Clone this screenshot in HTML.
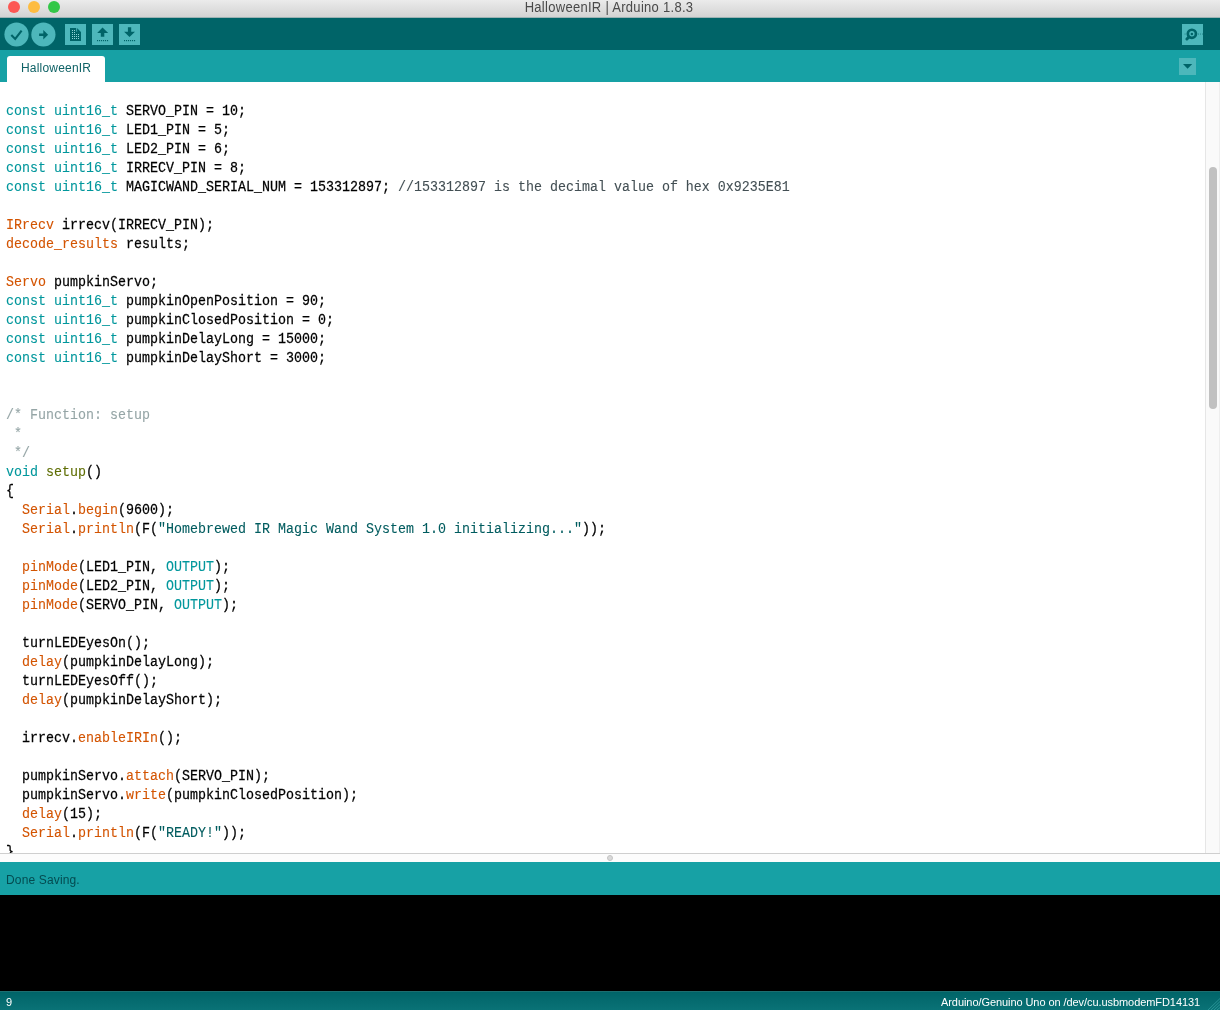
<!DOCTYPE html>
<html><head><meta charset="utf-8">
<style>
*{margin:0;padding:0;box-sizing:border-box}
html,body{width:1220px;height:1010px;overflow:hidden;background:#fff;font-family:"Liberation Sans",sans-serif}
#title{position:absolute;left:0;top:0;width:1220px;height:18px;background:linear-gradient(#ebebeb,#d3d3d3);border-bottom:1px solid #9db3b4}
#title .t{position:absolute;left:-1px;width:1220px;top:-2px;text-align:center;font-size:13px;letter-spacing:0.29px;line-height:15px;color:#4a4a4a}
.tl{position:absolute;top:1px;width:12px;height:12px;border-radius:50%}
#toolbar{position:absolute;left:0;top:18px;width:1220px;height:32px;background:#006468}
#tabs{position:absolute;left:0;top:50px;width:1220px;height:32px;background:#17a1a5}
#tab{position:absolute;left:7px;top:6px;width:98px;height:26px;background:#fff;border-radius:3px 3px 0 0;font-size:12px;letter-spacing:0.2px;color:#0f6266;line-height:24px;text-align:center}
.cb{position:absolute;top:4.5px;width:24px;height:24px;border-radius:50%;background:#4db7bb}
.sb{position:absolute;top:6px;width:21px;height:21px;background:#4db7bb}
#editor{position:absolute;left:0;top:82px;width:1205px;height:771px;overflow:hidden;background:#fff}
#code{position:absolute;left:6px;top:20px;will-change:transform;-webkit-text-stroke:0.22px;font-family:"Liberation Mono",monospace;font-size:13.33px;white-space:pre;color:#000}
.l{height:19px;width:1190px}
.t{height:16px;line-height:16px;transform:scale(1,1.15);transform-origin:0 0}
.k,.o,.c,.c2,.s,.g{-webkit-text-stroke:0.1px}
.ga{will-change:transform;display:inline-block}
.k{color:#00979c}.o{color:#d35400}.c{color:#95a5a6}.c2{color:#434f54}.s{color:#005c5f}.g{color:#5e6d03}
#scroll{position:absolute;left:1205px;top:82px;width:15px;height:771px;background:#fafafa;border-left:1px solid #e6e6e6;border-right:1px solid #eeeeee}
#thumb{position:absolute;left:3px;top:85px;width:8px;height:242px;border-radius:4px;background:#c1c1c1}
#divider{position:absolute;left:0;top:853px;width:1220px;height:9px;background:#fcfcfc;border-top:1px solid #cfcfcf}
#divider i{position:absolute;left:607px;top:1px;width:6px;height:6px;border-radius:50%;background:#d9d9d9;border:1px solid #c4c4c4}
#status{position:absolute;left:0;top:862px;width:1220px;height:33px;background:#17a1a5;font-size:12px;letter-spacing:0.15px;color:#044b50;line-height:36px;padding-left:6px}
#console{position:absolute;left:0;top:895px;width:1220px;height:96px;background:#000}
#bottom{position:absolute;left:0;top:991px;width:1220px;height:19px;background:linear-gradient(#006468,#0a7276);border-top:1px solid #1c6e70;color:#fff;font-size:11px;line-height:21px}
</style></head><body>
<div id="title">
<div class="tl" style="left:8px;background:#fc5753"></div>
<div class="tl" style="left:28px;background:#fdbc40"></div>
<div class="tl" style="left:48px;background:#33c748"></div>
<div class="t ga">HalloweenIR | Arduino 1.8.3</div>
</div>
<div id="toolbar">
<svg width="1220" height="32" viewBox="0 18 1220 32" style="position:absolute;left:0;top:0">
<g fill="#4db7bb">
<circle cx="16.5" cy="34.5" r="12.1"/><circle cx="43.4" cy="34.5" r="12.1"/>
<rect x="65" y="24" width="21" height="21"/><rect x="92" y="24" width="21" height="21"/><rect x="119" y="24" width="21" height="21"/>
<rect x="1182" y="24" width="21" height="21"/>
</g>
<g fill="#006468" stroke="none">
<path d="M11.3 35 L15.2 39 L21.6 30.7" fill="none" stroke="#006468" stroke-width="2.1"/>
<path d="M39.1 33.5 H43.3 V30.1 L48.1 34.7 L43.3 39.5 V35.9 H39.1 Z"/>
<!-- new doc -->
<path d="M70 28 H77 L81 32 V41 H70 Z"/>
<!-- upload -->
<path d="M102.5 27.6 L108.2 33 H104.3 V36.8 H100.8 V33 H97.2 Z"/>
<!-- download -->
<path d="M127.9 27.3 H131.2 V31.8 H135 L129.5 37 L124.1 31.8 H127.9 Z"/>
</g>
<g fill="#4db7bb">
<path d="M77.6 28 L81 31.4 V28 Z" /><rect x="76.2" y="28" width="0.9" height="3.6" fill="#4db7bb"/>
</g>
<g fill="#8fd3d6" id="dots"><rect x="72" y="30" width="1" height="1"/><rect x="74" y="30" width="1" height="1"/><rect x="72" y="32" width="1" height="1"/><rect x="74" y="32" width="1" height="1"/><rect x="72" y="34" width="1" height="1"/><rect x="74" y="34" width="1" height="1"/><rect x="76" y="34" width="1" height="1"/><rect x="78" y="34" width="1" height="1"/><rect x="72" y="36" width="1" height="1"/><rect x="74" y="36" width="1" height="1"/><rect x="76" y="36" width="1" height="1"/><rect x="78" y="36" width="1" height="1"/><rect x="72" y="38" width="1" height="1"/><rect x="74" y="38" width="1" height="1"/><rect x="76" y="38" width="1" height="1"/><rect x="78" y="38" width="1" height="1"/></g>
<g fill="#006468" id="udots"><rect x="97" y="40" width="1.1" height="1.2"/><rect x="124" y="40" width="1.1" height="1.2"/><rect x="99" y="40" width="1.1" height="1.2"/><rect x="126" y="40" width="1.1" height="1.2"/><rect x="101" y="40" width="1.1" height="1.2"/><rect x="128" y="40" width="1.1" height="1.2"/><rect x="103" y="40" width="1.1" height="1.2"/><rect x="130" y="40" width="1.1" height="1.2"/><rect x="105" y="40" width="1.1" height="1.2"/><rect x="132" y="40" width="1.1" height="1.2"/><rect x="107" y="40" width="1.1" height="1.2"/><rect x="134" y="40" width="1.1" height="1.2"/></g>
<!-- serial monitor -->
<circle cx="1191.9" cy="33.8" r="4.05" fill="none" stroke="#006468" stroke-width="2.7"/>
<circle cx="1191.9" cy="33.9" r="1.25" fill="#006468"/>
<path d="M1189 37 L1186.9 39" stroke="#006468" stroke-width="3" stroke-linecap="round"/>
<g fill="#006468" opacity="0.75"><rect x="1184.6" y="33.6" width="0.9" height="0.9"/><rect x="1198" y="33.6" width="0.9" height="0.9"/><rect x="1200" y="33.6" width="0.9" height="0.9"/><rect x="1202" y="33.6" width="0.9" height="0.9"/></g>
</svg>
</div>
<div id="tabs"><div id="tab"><span class="ga">HalloweenIR</span></div>
<svg width="17" height="17" style="position:absolute;left:1179px;top:8px"><rect width="17" height="17" fill="#4db7bb"/><path d="M4 6 H13.2 L8.6 10.8 Z" fill="#006468"/></svg>
</div>
<div id="editor"><div id="code"><div class="l"><div class="t"><span class="k">const</span> <span class="k">uint16_t</span> SERVO_PIN = 10;</div></div><div class="l"><div class="t"><span class="k">const</span> <span class="k">uint16_t</span> LED1_PIN = 5;</div></div><div class="l"><div class="t"><span class="k">const</span> <span class="k">uint16_t</span> LED2_PIN = 6;</div></div><div class="l"><div class="t"><span class="k">const</span> <span class="k">uint16_t</span> IRRECV_PIN = 8;</div></div><div class="l"><div class="t"><span class="k">const</span> <span class="k">uint16_t</span> MAGICWAND_SERIAL_NUM = 153312897; <span class="c2">//153312897 is the decimal value of hex 0x9235E81</span></div></div><div class="l"><div class="t"> </div></div><div class="l"><div class="t"><span class="o">IRrecv</span> irrecv(IRRECV_PIN);</div></div><div class="l"><div class="t"><span class="o">decode_results</span> results;</div></div><div class="l"><div class="t"> </div></div><div class="l"><div class="t"><span class="o">Servo</span> pumpkinServo;</div></div><div class="l"><div class="t"><span class="k">const</span> <span class="k">uint16_t</span> pumpkinOpenPosition = 90;</div></div><div class="l"><div class="t"><span class="k">const</span> <span class="k">uint16_t</span> pumpkinClosedPosition = 0;</div></div><div class="l"><div class="t"><span class="k">const</span> <span class="k">uint16_t</span> pumpkinDelayLong = 15000;</div></div><div class="l"><div class="t"><span class="k">const</span> <span class="k">uint16_t</span> pumpkinDelayShort = 3000;</div></div><div class="l"><div class="t"> </div></div><div class="l"><div class="t"> </div></div><div class="l"><div class="t"><span class="c">/* Function: setup</span></div></div><div class="l"><div class="t"><span class="c"> *</span></div></div><div class="l"><div class="t"><span class="c"> */</span></div></div><div class="l"><div class="t"><span class="k">void</span> <span class="g">setup</span>()</div></div><div class="l"><div class="t">{</div></div><div class="l"><div class="t">  <span class="o">Serial</span>.<span class="o">begin</span>(9600);</div></div><div class="l"><div class="t">  <span class="o">Serial</span>.<span class="o">println</span>(F(<span class="s">"Homebrewed IR Magic Wand System 1.0 initializing..."</span>));</div></div><div class="l"><div class="t"> </div></div><div class="l"><div class="t">  <span class="o">pinMode</span>(LED1_PIN, <span class="k">OUTPUT</span>);</div></div><div class="l"><div class="t">  <span class="o">pinMode</span>(LED2_PIN, <span class="k">OUTPUT</span>);</div></div><div class="l"><div class="t">  <span class="o">pinMode</span>(SERVO_PIN, <span class="k">OUTPUT</span>);</div></div><div class="l"><div class="t"> </div></div><div class="l"><div class="t">  turnLEDEyesOn();</div></div><div class="l"><div class="t">  <span class="o">delay</span>(pumpkinDelayLong);</div></div><div class="l"><div class="t">  turnLEDEyesOff();</div></div><div class="l"><div class="t">  <span class="o">delay</span>(pumpkinDelayShort);</div></div><div class="l"><div class="t"> </div></div><div class="l"><div class="t">  irrecv.<span class="o">enableIRIn</span>();</div></div><div class="l"><div class="t"> </div></div><div class="l"><div class="t">  pumpkinServo.<span class="o">attach</span>(SERVO_PIN);</div></div><div class="l"><div class="t">  pumpkinServo.<span class="o">write</span>(pumpkinClosedPosition);</div></div><div class="l"><div class="t">  <span class="o">delay</span>(15);</div></div><div class="l"><div class="t">  <span class="o">Serial</span>.<span class="o">println</span>(F(<span class="s">"READY!"</span>));</div></div><div class="l"><div class="t">}</div></div></div></div>
<div id="scroll"><div id="thumb"></div></div>
<div id="divider"><i></i></div>
<div id="status"><span class="ga">Done Saving.</span></div>
<div id="console"></div>
<div id="bottom"><span class="ga" style="position:absolute;left:6px;top:0">9</span><span class="ga" style="position:absolute;right:20px;top:0;letter-spacing:-0.07px">Arduino/Genuino Uno on /dev/cu.usbmodemFD14131</span><svg width="14" height="14" style="position:absolute;right:0;bottom:0"><g stroke="#3aa6a8" stroke-width="1" opacity="0.65"><path d="M2 14 L14 2.5 M5 14 L14 5.5 M8 14 L14 8.5 M11 14 L14 11.5"/></g></svg></div>
</body></html>
